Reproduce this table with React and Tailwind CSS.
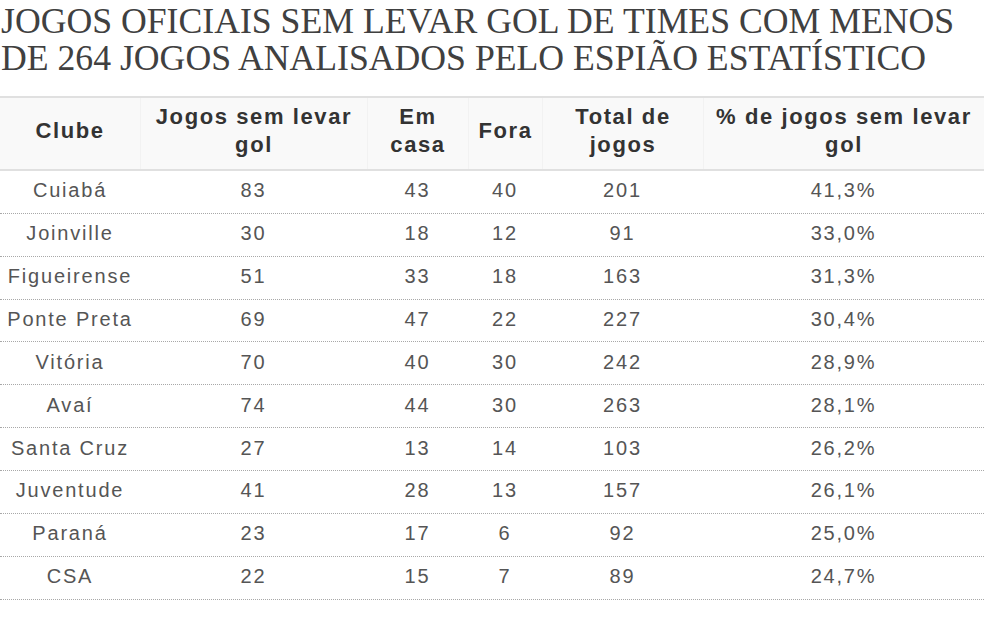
export default function App() {
  const rows = [
    ["Cuiabá", "83", "43", "40", "201", "41,3%"],
    ["Joinville", "30", "18", "12", "91", "33,0%"],
    ["Figueirense", "51", "33", "18", "163", "31,3%"],
    ["Ponte Preta", "69", "47", "22", "227", "30,4%"],
    ["Vitória", "70", "40", "30", "242", "28,9%"],
    ["Avaí", "74", "44", "30", "263", "28,1%"],
    ["Santa Cruz", "27", "13", "14", "103", "26,2%"],
    ["Juventude", "41", "28", "13", "157", "26,1%"],
    ["Paraná", "23", "17", "6", "92", "25,0%"],
    ["CSA", "22", "15", "7", "89", "24,7%"],
  ];
  const headers = [
    "Clube",
    "Jogos sem levar gol",
    "Em casa",
    "Fora",
    "Total de jogos",
    "% de jogos sem levar gol",
  ];
  const grid = "grid grid-cols-[140px_227px_101px_74px_161px_281px]";
  return (
    <div className="w-[984px] min-h-[642px] bg-white">
      <h1 className="pt-[3px] pl-[1px] font-['Liberation_Serif',serif] text-[35.7px] leading-[37px] font-normal text-[#404040]">
        JOGOS OFICIAIS SEM LEVAR GOL DE TIMES COM MENOS DE 264 JOGOS ANALISADOS PELO ESPIÃO ESTATÍSTICO
      </h1>
      <div className="mt-[19px] font-['Liberation_Sans',Arial,sans-serif]">
        <div className={`${grid} h-[75px] border-y-2 border-[#e0e0e0] bg-[#f9f9f9]`}>
          {headers.map((h, i) => (
            <div
              key={h}
              className={`flex items-center justify-center px-2 pt-[3px] pb-[8px] text-center text-[22px] leading-[28px] font-bold tracking-[1.6px] text-[#333] ${
                i > 0 ? "border-l border-[#f2f2f2]" : ""
              }`}
            >
              {h}
            </div>
          ))}
        </div>
        {rows.map((r) => (
          <div
            key={r[0]}
            className={`${grid} h-[42.86px] border-b border-dotted border-[#a8a8a8]`}
          >
            {r.map((c, j) => (
              <div
                key={j}
                className="flex items-center justify-center pb-[3px] text-center text-[20px] leading-[24px] tracking-[1.8px] text-[#555]"
              >
                {c}
              </div>
            ))}
          </div>
        ))}
      </div>
    </div>
  );
}
